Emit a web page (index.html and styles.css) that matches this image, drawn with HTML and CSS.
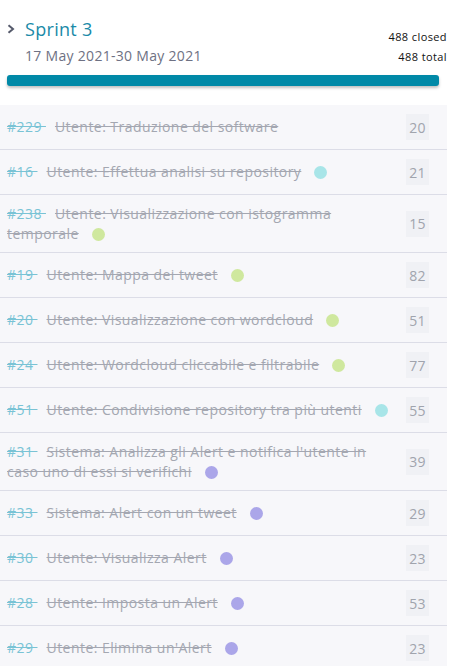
FILE: index.html
```html
<!DOCTYPE html>
<html>
<head>
<meta charset="utf-8">
<link rel="stylesheet" href="styles.css">
</head>
<body>
<div class="sprint">
  <div class="head">
    <div class="head-left">
      <div class="title-row">
        <svg class="chev" width="8" height="10" viewBox="0 0 8 10"><polyline points="1.5,1.2 6,5 1.5,8.8" fill="none" stroke="#555a6b" stroke-width="2"/></svg>
        <span class="title">Sprint 3</span>
      </div>
      <div class="dates">17 May 2021-30 May 2021</div>
    </div>
    <div class="stats">
      <div class="stat closed">488 closed</div>
      <div class="stat">488 total</div>
    </div>
  </div>
  <div class="bar"></div>
  <ul class="list">
    <li class="row"><div class="txt"><span class="id">#229 </span><span class="name">Utente: Traduzione del software</span></div><span class="pts">20</span></li>
    <li class="row"><div class="txt"><span class="id">#16 </span><span class="name">Utente: Effettua analisi su repository</span><span class="dot cyan"></span></div><span class="pts">21</span></li>
    <li class="row"><div class="txt"><span class="id">#238 </span><span class="name">Utente: Visualizzazione con istogramma temporale</span><span class="dot green"></span></div><span class="pts">15</span></li>
    <li class="row"><div class="txt"><span class="id">#19 </span><span class="name">Utente: Mappa dei tweet</span><span class="dot green"></span></div><span class="pts">82</span></li>
    <li class="row"><div class="txt"><span class="id">#20 </span><span class="name">Utente: Visualizzazione con wordcloud</span><span class="dot green"></span></div><span class="pts">51</span></li>
    <li class="row"><div class="txt"><span class="id">#24 </span><span class="name">Utente: Wordcloud cliccabile e filtrabile</span><span class="dot green"></span></div><span class="pts">77</span></li>
    <li class="row"><div class="txt"><span class="id">#51 </span><span class="name">Utente: Condivisione repository tra più utenti</span><span class="dot cyan"></span></div><span class="pts">55</span></li>
    <li class="row"><div class="txt"><span class="id">#31 </span><span class="name">Sistema: Analizza gli Alert e notifica l'utente in caso uno di essi si verifichi</span><span class="dot purple"></span></div><span class="pts">39</span></li>
    <li class="row"><div class="txt"><span class="id">#33 </span><span class="name">Sistema: Alert con un tweet</span><span class="dot purple"></span></div><span class="pts">29</span></li>
    <li class="row"><div class="txt"><span class="id">#30 </span><span class="name">Utente: Visualizza Alert</span><span class="dot purple"></span></div><span class="pts">23</span></li>
    <li class="row"><div class="txt"><span class="id">#28 </span><span class="name">Utente: Imposta un Alert</span><span class="dot purple"></span></div><span class="pts">53</span></li>
    <li class="row"><div class="txt"><span class="id">#29 </span><span class="name">Utente: Elimina un'Alert</span><span class="dot purple"></span></div><span class="pts">23</span></li>
  </ul>
</div>
</body>
</html>
```
FILE: styles.css
```css
html, body {
  margin: 0;
  padding: 0;
  background: #ffffff;
}
body {
  font-family: "Open Sans", "Noto Sans", sans-serif;
  overflow: hidden;
}
.sprint {
  width: 447px;
}
.head {
  display: flex;
  justify-content: space-between;
  align-items: flex-start;
  padding: 16px 0 0 7px;
}
.title-row {
  display: flex;
  align-items: center;
  gap: 10px;
  height: 26px;
}
.chev {
  display: block;
}
.title {
  color: #1a8aa8;
  font-size: 18px;
  font-weight: 500;
  letter-spacing: 0.3px;
  margin-top: -1px;
}
.dates {
  color: #6e7183;
  font-size: 14px;
  letter-spacing: 0.3px;
  margin: 3px 0 0 18px;
  line-height: 22px;
}
.stats {
  padding-top: 11px;
  text-align: right;
  font-size: 11px;
  letter-spacing: 0.4px;
  color: #111;
}
.stat {
  line-height: 20px;
}
.bar {
  margin: 8px 8px 19px 7px;
  height: 11px;
  border-radius: 3px;
  background: #0089a7;
  box-shadow: 0 2px 3px rgba(0, 0, 0, 0.25);
}
.list {
  list-style: none;
  margin: 0;
  padding: 0;
  background: #f7f7fa;
}
.row {
  display: flex;
  align-items: center;
  padding: 9px 18px 9px 7px;
  border-bottom: 1px solid #dcdde7;
  gap: 12px;
}
.txt {
  flex: 1;
  font-size: 14px;
  letter-spacing: 0.45px;
  line-height: 19.5px;
  color: #a4a7b1;
}
.id {
  color: #79c3d5;
  text-decoration: line-through;
  margin-right: 9px;
}
.name {
  text-decoration: line-through;
}
.dot {
  display: inline-block;
  width: 13px;
  height: 13px;
  border-radius: 50%;
  margin-left: 13px;
  vertical-align: -2px;
}
.cyan { background: #a8e5e8; }
.green { background: #cfe89e; }
.purple { background: #aba6e9; }
.pts {
  width: 23px;
  height: 26px;
  background: #f0f1f5;
  color: #a0a4ad;
  font-size: 14px;
  letter-spacing: 0.3px;
  display: flex;
  align-items: center;
  justify-content: center;
  flex-shrink: 0;
}
```
